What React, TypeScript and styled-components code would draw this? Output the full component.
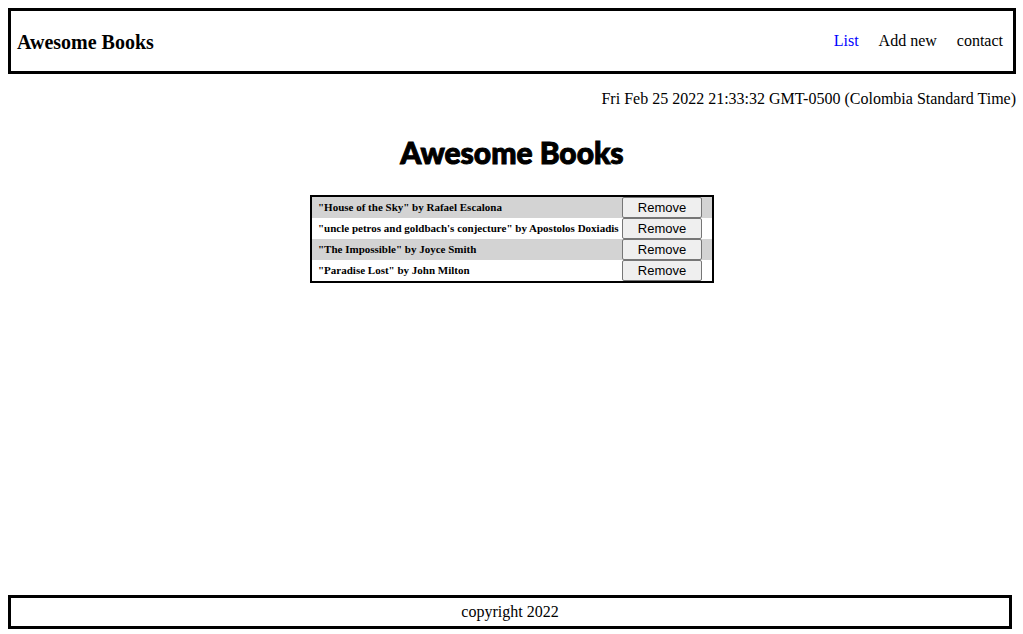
import React, { useState } from "react";
import styled, { createGlobalStyle } from "styled-components";

const GlobalStyle = createGlobalStyle`
  *, *::before, *::after { box-sizing: border-box; }
  body {
    margin: 0;
    background: #fff;
    color: #000;
    font-family: "Liberation Serif", "Times New Roman", serif;
    font-size: 16px;
    line-height: 18px;
  }
`;

const Page = styled.div`
  display: flex;
  flex-direction: column;
  min-height: 100vh;
  padding: 8px 7px 5px 8px;
`;

const Header = styled.header`
  display: flex;
  align-items: center;
  justify-content: space-between;
  padding: 21px 10px 19px 6px;
  border: 3px solid #000;
`;

const Brand = styled.h3`
  margin: 0;
  font-size: 20px;
  line-height: 20px;
`;

const Nav = styled.nav`
  display: flex;
  gap: 20px;
  padding-bottom: 2px;
`;

const NavLink = styled.a<{ $active?: boolean }>`
  color: ${({ $active }) => ($active ? "#0000ff" : "#000")};
  text-decoration: none;
`;

const DateLine = styled.time`
  margin-top: 16px;
  text-align: right;
`;

const Main = styled.main`
  display: flex;
  flex: 1;
  flex-direction: column;
  align-items: center;
`;

const Title = styled.h1`
  margin: 24px 0 23px;
  font-family: Lato, sans-serif;
  font-size: 30px;
  line-height: 40px;
  font-weight: 900;
  -webkit-text-stroke: 1px #000;
`;

const BookList = styled.ul`
  width: 404px;
  max-width: 100%;
  margin: 0;
  padding: 0;
  border: 2px solid #000;
  list-style: none;
`;

const BookRow = styled.li`
  display: flex;
  align-items: center;
  justify-content: space-between;
  padding: 0 10px 0 6px;

  &:nth-child(odd) {
    background: #d3d3d3;
  }
`;

const BookName = styled.h6`
  margin: 0;
  padding-bottom: 2px;
  font-size: 11px;
  line-height: 12px;
`;

const RemoveButton = styled.button`
  width: 80px;
  height: 21px;
  padding: 0;
  border: 1px solid #767676;
  border-radius: 2px;
  background: #efefef;
  color: #000;
  font-family: "Liberation Sans", Arial, sans-serif;
  font-size: 13px;
  line-height: 15px;
`;

const Footer = styled.footer`
  margin-right: 4px;
  padding: 5px;
  border: 3px solid #000;
  text-align: center;
`;

const initialBooks = [
  { title: "House of the Sky", author: "Rafael Escalona" },
  { title: "uncle petros and goldbach's conjecture", author: "Apostolos Doxiadis" },
  { title: "The Impossible", author: "Joyce Smith" },
  { title: "Paradise Lost", author: "John Milton" },
];

export default function App() {
  const [books, setBooks] = useState(initialBooks);

  return (
    <Page>
      <GlobalStyle />
      <Header>
        <Brand>Awesome Books</Brand>
        <Nav>
          <NavLink href="#list" $active>List</NavLink>
          <NavLink href="#add">Add new</NavLink>
          <NavLink href="#contact">contact</NavLink>
        </Nav>
      </Header>
      <DateLine dateTime="2022-02-25T21:33:32-05:00">
        Fri Feb 25 2022 21:33:32 GMT-0500 (Colombia Standard Time)
      </DateLine>
      <Main>
        <Title>Awesome Books</Title>
        <BookList>
          {books.map((book) => (
            <BookRow key={book.title}>
              <BookName>{`"${book.title}" by ${book.author}`}</BookName>
              <RemoveButton
                type="button"
                onClick={() => setBooks(books.filter((b) => b !== book))}
              >
                Remove
              </RemoveButton>
            </BookRow>
          ))}
        </BookList>
      </Main>
      <Footer>copyright 2022</Footer>
    </Page>
  );
}
